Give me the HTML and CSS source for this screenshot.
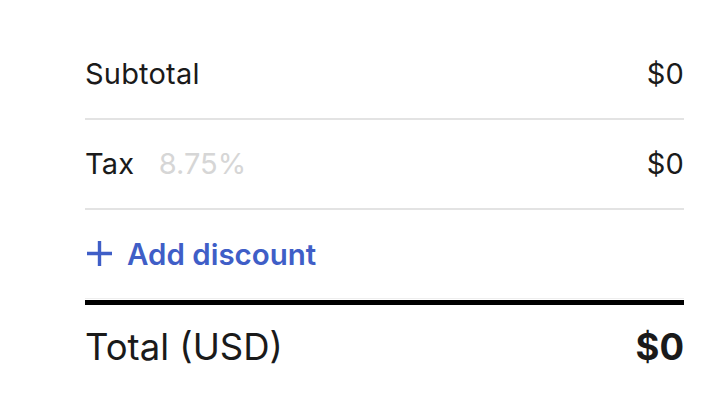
FILE: index.html
```html
<!DOCTYPE html>
<html>
<head>
<meta charset="utf-8">
<link rel="stylesheet" href="styles.css">
</head>
<body>
<div class="summary">
  <div class="row line">
    <span class="label">Subtotal</span>
    <span class="amount">$0</span>
  </div>
  <div class="row line">
    <span class="label">Tax <span class="rate">8.75%</span></span>
    <span class="amount">$0</span>
  </div>
  <div class="row discount">
    <a class="add" href="#">
      <svg class="plus" width="25" height="25" viewBox="0 0 25 25"><path d="M12.5 0V25M0 12.5H25" stroke="currentColor" stroke-width="3.4" fill="none"/></svg>
      <span>Add discount</span>
    </a>
  </div>
  <div class="row total">
    <span class="label">Total (USD)</span>
    <span class="amount">$0</span>
  </div>
</div>
</body>
</html>
```
FILE: styles.css
```css
html, body {
  margin: 0;
  padding: 0;
  background: #fff;
}
body {
  font-family: "Inter", "Lato", sans-serif;
  color: #1a1a1a;
}
.summary {
  padding: 30px 34px 0 85px;
}
.row {
  display: flex;
  align-items: center;
  justify-content: space-between;
}
.line {
  height: 86px;
  padding-bottom: 2px;
  border-bottom: 2px solid #e3e3e3;
  font-size: 29px;
  letter-spacing: 0.2px;
}
.rate {
  color: #d6d6d6;
  margin-left: 16px;
  letter-spacing: 0;
}
.discount {
  height: 87px;
  padding-bottom: 1px;
  border-bottom: 1px solid #eeeeee;
  margin-bottom: 1px;
}
.add {
  display: flex;
  align-items: center;
  gap: 15px;
  color: #3f5ec7;
  text-decoration: none;
  font-size: 29.5px;
  font-weight: 600;
  padding-left: 2px;
}
.plus {
  display: block;
}
.total {
  border-top: 5px solid #000;
  height: 80px;
  padding-top: 2px;
  font-size: 36.5px;
}
.total .amount {
  font-weight: 700;
}
```
